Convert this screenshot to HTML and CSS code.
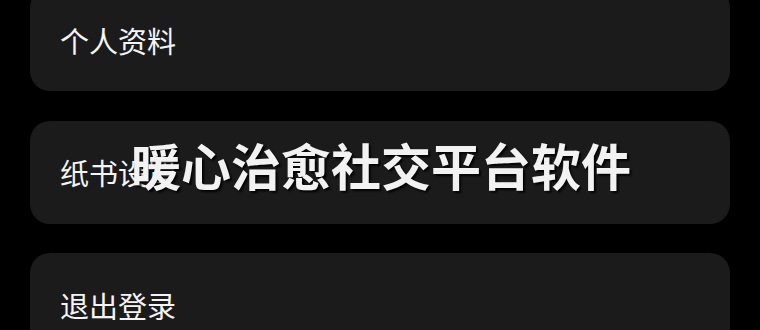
FILE: index.html
```html
<!DOCTYPE html>
<html>
<head>
<meta charset="utf-8">
<link rel="stylesheet" href="styles.css">
</head>
<body>
<div class="menu">
  <div class="item">个人资料</div>
  <div class="item">纸书设置</div>
  <div class="item">退出登录</div>
</div>
<div class="banner">暖心治愈社交平台软件</div>
</body>
</html>
```

FILE: styles.css
```css
body{
  margin: 0;
  background: #000;
  font-family: "Noto Sans CJK SC", sans-serif;
  color: #f4f4f4;
  overflow: hidden;
}
.menu{
  display: flex;
  flex-direction: column;
  gap: 29.5px;
  margin-top: -12px;
  padding: 0 30px;
}
.item{
  height: 103px;
  display: flex;
  align-items: center;
  padding-left: 30px;
  background: #1b1b1b;
  border-radius: 20px;
  font-size: 29px;
}
.banner{
  position: absolute;
  left: 131px;
  top: 139px;
  font-size: 50px;
  line-height: 50px;
  font-weight: bold;
  color: #f2f2f2;
  text-shadow: 2px 2px 2px rgba(0,0,0,0.85);
}
```
